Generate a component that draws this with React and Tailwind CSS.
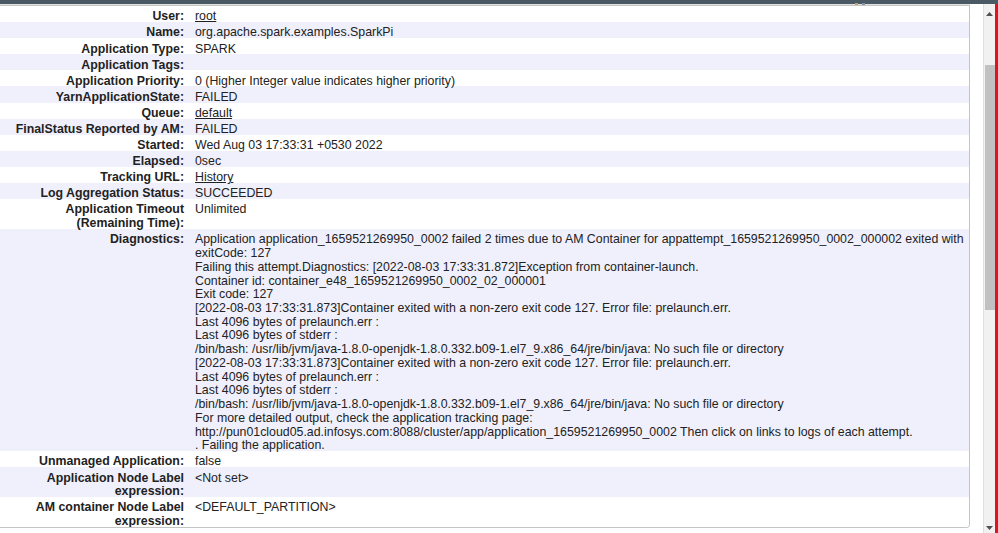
import React from "react";

const diag = [
  "Application application_1659521269950_0002 failed 2 times due to AM Container for appattempt_1659521269950_0002_000002 exited with",
  "exitCode: 127",
  "Failing this attempt.Diagnostics: [2022-08-03 17:33:31.872]Exception from container-launch.",
  "Container id: container_e48_1659521269950_0002_02_000001",
  "Exit code: 127",
  "[2022-08-03 17:33:31.873]Container exited with a non-zero exit code 127. Error file: prelaunch.err.",
  "Last 4096 bytes of prelaunch.err :",
  "Last 4096 bytes of stderr :",
  "/bin/bash: /usr/lib/jvm/java-1.8.0-openjdk-1.8.0.332.b09-1.el7_9.x86_64/jre/bin/java: No such file or directory",
  "[2022-08-03 17:33:31.873]Container exited with a non-zero exit code 127. Error file: prelaunch.err.",
  "Last 4096 bytes of prelaunch.err :",
  "Last 4096 bytes of stderr :",
  "/bin/bash: /usr/lib/jvm/java-1.8.0-openjdk-1.8.0.332.b09-1.el7_9.x86_64/jre/bin/java: No such file or directory",
  "For more detailed output, check the application tracking page:",
  "http://pun01cloud05.ad.infosys.com:8088/cluster/app/application_1659521269950_0002 Then click on links to logs of each attempt.",
  ". Failing the application.",
];

const rows = [
  { label: ["User:"], value: "root", link: true },
  { label: ["Name:"], value: "org.apache.spark.examples.SparkPi" },
  { label: ["Application Type:"], value: "SPARK" },
  { label: ["Application Tags:"], value: "" },
  { label: ["Application Priority:"], value: "0 (Higher Integer value indicates higher priority)" },
  { label: ["YarnApplicationState:"], value: "FAILED" },
  { label: ["Queue:"], value: "default", link: true },
  { label: ["FinalStatus Reported by AM:"], value: "FAILED" },
  { label: ["Started:"], value: "Wed Aug 03 17:33:31 +0530 2022" },
  { label: ["Elapsed:"], value: "0sec" },
  { label: ["Tracking URL:"], value: "History", link: true },
  { label: ["Log Aggregation Status:"], value: "SUCCEEDED" },
  { label: ["Application Timeout", "(Remaining Time):"], value: "Unlimited" },
  { label: ["Diagnostics:"], lines: diag },
  { label: ["Unmanaged Application:"], value: "false" },
  { label: ["Application Node Label", "expression:"], value: "<Not set>" },
  { label: ["AM container Node Label", "expression:"], value: "<DEFAULT_PARTITION>" },
];

function Row({ r, i }) {
  const bg = i % 2 === 1 ? "bg-[#f0f0fc]" : "bg-white";
  return (
    <div className={`flex ${bg} pt-[4.37px] pb-0 leading-[13.73px]`}>
      <div className="w-[186px] shrink-0 pr-[2px] mb-[-2px] text-right font-bold text-[#222]">
        {r.label.map((l, k) => (
          <div key={k} className="whitespace-nowrap">{l}</div>
        ))}
      </div>
      <div className="flex-1 pl-[9px] pr-[4px] mb-[-2px] text-[#222]">
        {r.lines ? (
          r.lines.map((l, k) => (
            <div key={k} className="whitespace-nowrap">{l}</div>
          ))
        ) : r.link ? (
          <span className="underline">{r.value}</span>
        ) : (
          <span className="whitespace-pre">{r.value || "\u00a0"}</span>
        )}
      </div>
    </div>
  );
}

export default function App() {
  return (
    <div
      className="w-[998px] h-[533px] overflow-hidden bg-white text-[12.35px] flex flex-col"
      style={{ fontFamily: '"Liberation Sans", Arial, sans-serif' }}
    >
      <div className="h-[4px] shrink-0 bg-[#4a5a64] relative">
        <div className="absolute left-[855px] top-[3px] w-[3px] h-[2px] bg-[#c8a070]"></div>
        <div className="absolute left-[862px] top-[3px] w-[3px] h-[2px] bg-[#8090a0]"></div>
      </div>
      <div className="flex flex-1 min-h-0">
        <div className="flex flex-col w-[983px] shrink-0">
          <div className="h-[1px] bg-[#e2e2e2] w-[970px]"></div>
          <div className="w-[970px] border-t border-r border-b border-[#c4c4c4] rounded-br-[4px] overflow-hidden">
            {rows.map((r, i) => (
              <Row key={i} r={r} i={i} />
            ))}
          </div>
        </div>
        <div className="w-[12px] shrink-0 border-l border-[#dedede] bg-[#f1f1f1] flex flex-col items-center">
          <div className="h-[16px] w-full flex items-center justify-center pt-[3px]">
            <svg width="7" height="4" viewBox="0 0 7 4"><path d="M0 4 L3.5 0 L7 4 Z" fill="#505050" /></svg>
          </div>
          <div className="mt-[45px] w-[10px] h-[245px] bg-[#c1c1c1]"></div>
          <div className="flex-1"></div>
          <div className="h-[10px] w-full flex items-center justify-center">
            <svg width="7" height="4" viewBox="0 0 7 4"><path d="M0 0 L3.5 4 L7 0 Z" fill="#505050" /></svg>
          </div>
        </div>
        <div className="w-[3px] shrink-0 bg-[#e0141e]"></div>
      </div>
    </div>
  );
}
